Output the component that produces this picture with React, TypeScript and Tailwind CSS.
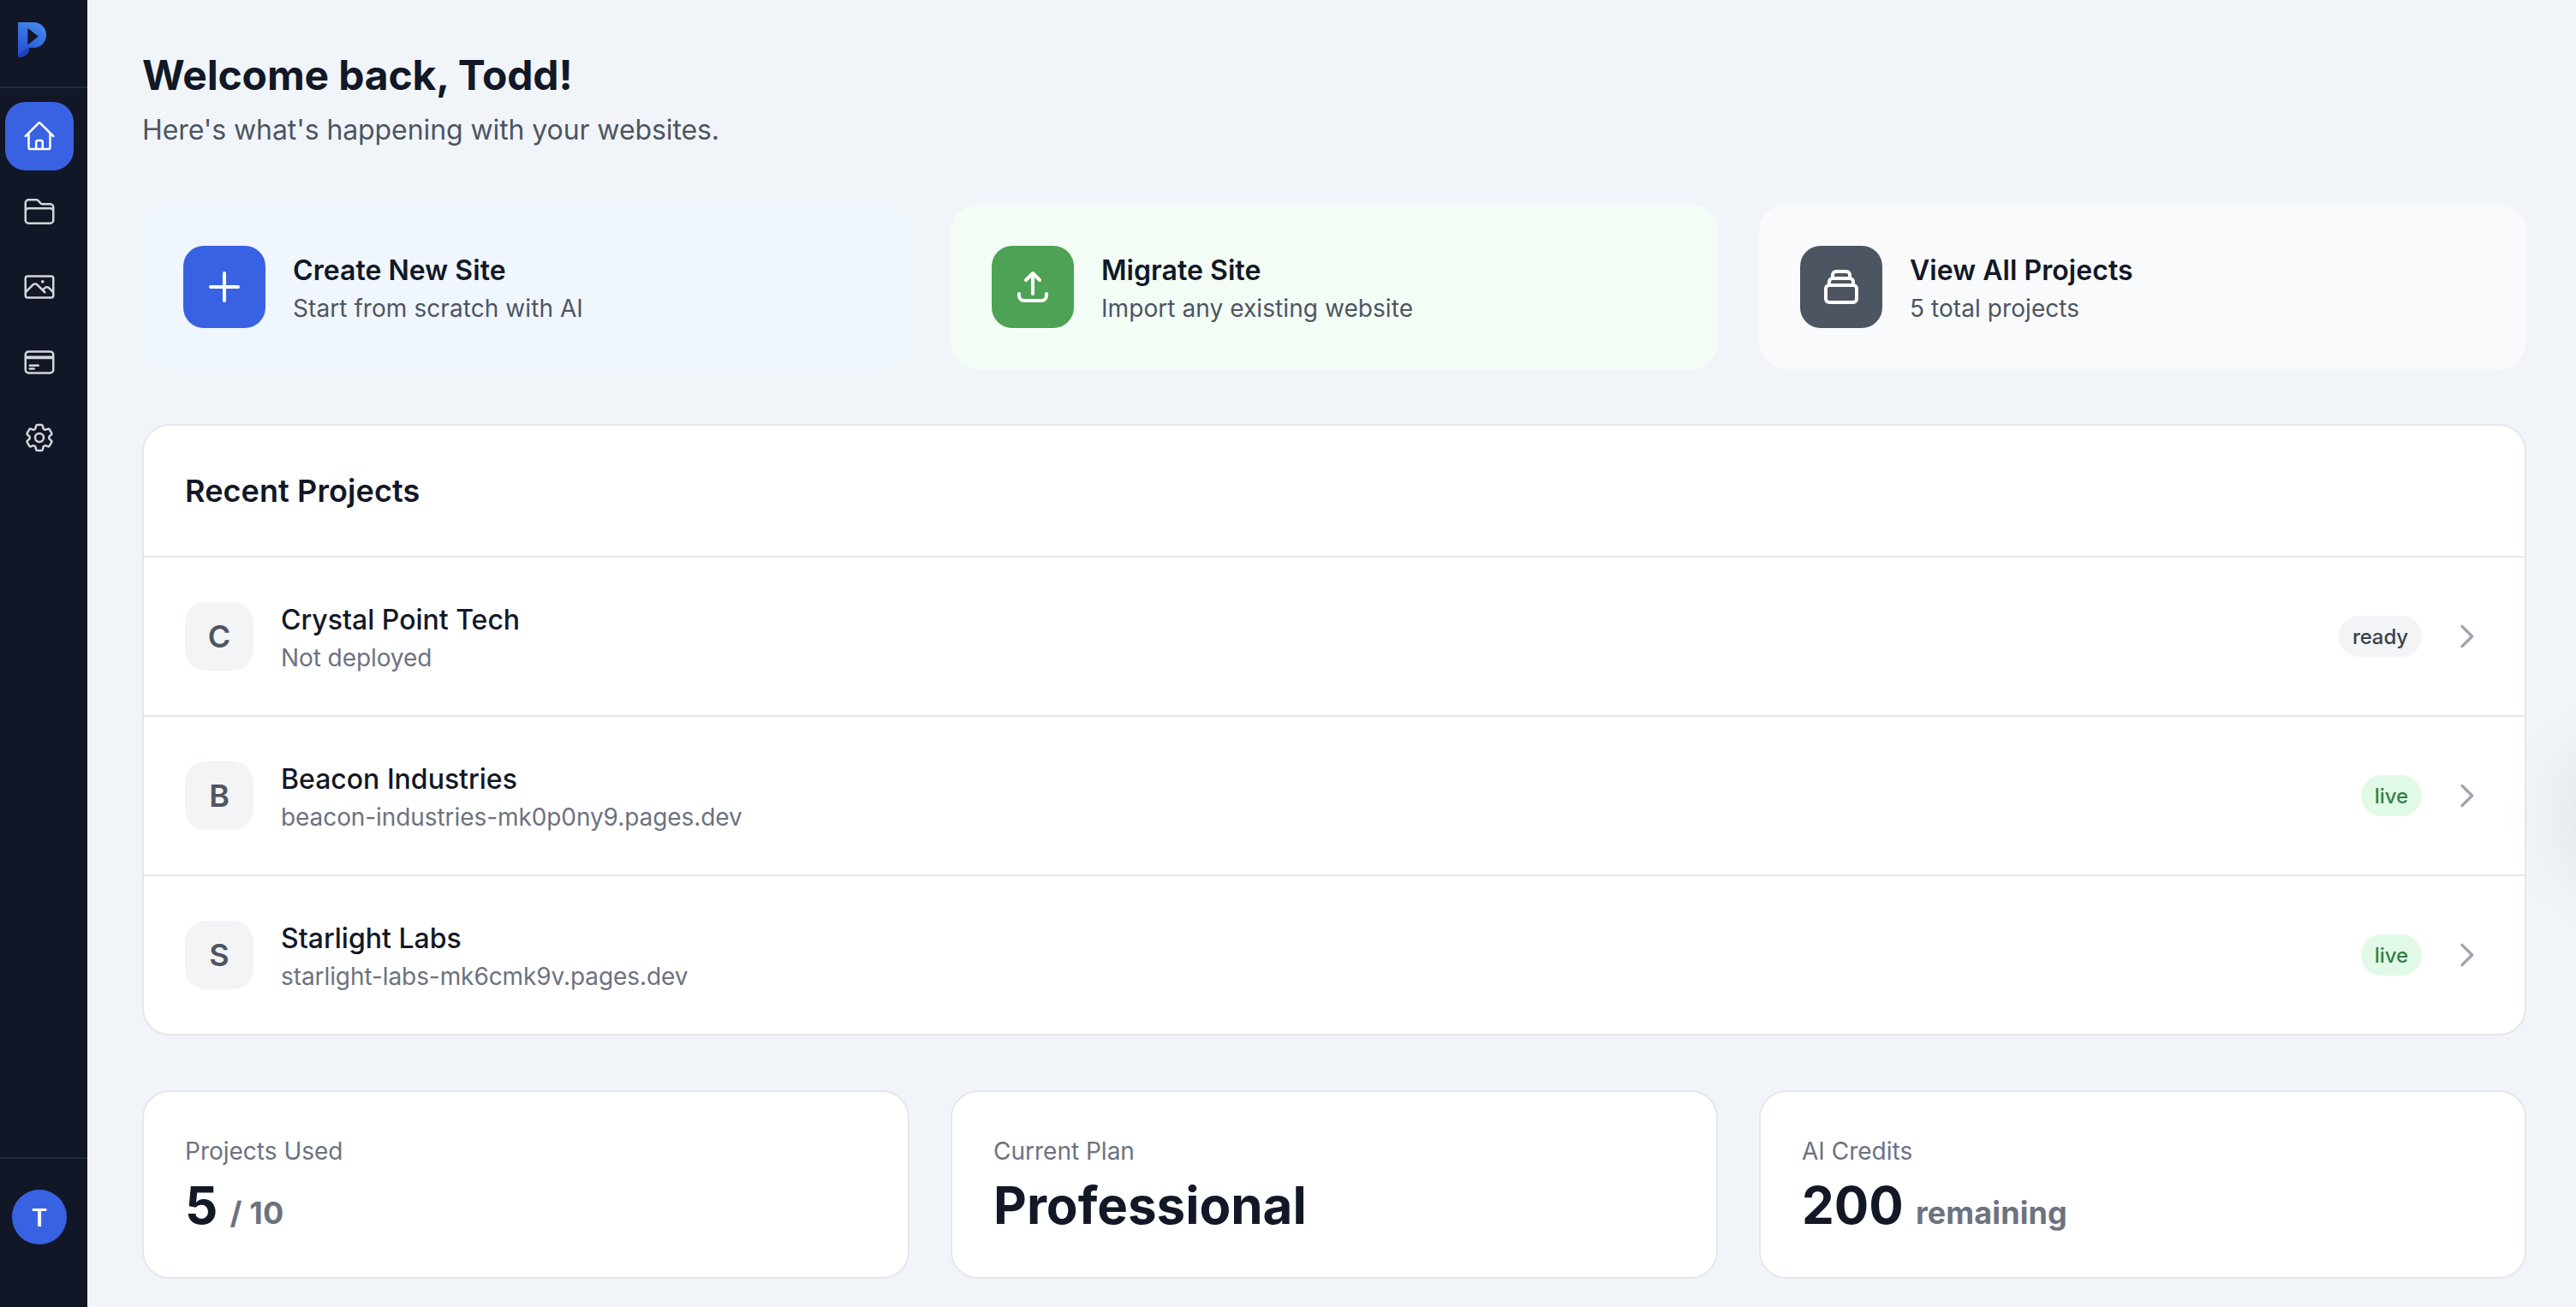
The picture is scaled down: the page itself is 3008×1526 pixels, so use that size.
import clsx from "clsx";
import type { IconType } from "react-icons";
import {
  HiOutlineChevronRight,
  HiOutlineCollection,
  HiOutlinePlus,
  HiOutlineUpload,
} from "react-icons/hi";
import {
  HiOutlineCog6Tooth,
  HiOutlineCreditCard,
  HiOutlineFolder,
  HiOutlineHome,
  HiOutlinePhoto,
} from "react-icons/hi2";

interface NavItem {
  label: string;
  icon: IconType;
  active?: boolean;
}

const NAV: NavItem[] = [
  { label: "Dashboard", icon: HiOutlineHome, active: true },
  { label: "Projects", icon: HiOutlineFolder },
  { label: "Media", icon: HiOutlinePhoto },
  { label: "Billing", icon: HiOutlineCreditCard },
  { label: "Settings", icon: HiOutlineCog6Tooth },
];

const ACTIONS = [
  {
    title: "Create New Site",
    hint: "Start from scratch with AI",
    icon: HiOutlinePlus,
    card: "bg-[#f0f6fe]",
    tile: "bg-[#3962e3]",
  },
  {
    title: "Migrate Site",
    hint: "Import any existing website",
    icon: HiOutlineUpload,
    card: "bg-[#f3fdf5]",
    tile: "bg-[#4ea255]",
  },
  {
    title: "View All Projects",
    hint: "5 total projects",
    icon: HiOutlineCollection,
    card: "bg-[#f9fafc]",
    tile: "bg-[#4d5562]",
  },
];

const PROJECTS = [
  { name: "Crystal Point Tech", url: "Not deployed", status: "ready" },
  {
    name: "Beacon Industries",
    url: "beacon-industries-mk0p0ny9.pages.dev",
    status: "live",
  },
  {
    name: "Starlight Labs",
    url: "starlight-labs-mk6cmk9v.pages.dev",
    status: "live",
  },
];

const STATS = [
  { label: "Projects Used", value: "5", suffix: "/ 10" },
  { label: "Current Plan", value: "Professional" },
  { label: "AI Credits", value: "200", suffix: "remaining" },
];

export default function App() {
  return (
    <div className="relative flex h-[1526px] w-[3008px] overflow-hidden bg-[#f1f5fa] font-['Inter',sans-serif] text-[#121826]">
      <Sidebar />

      <main className="flex-1 pt-14 pr-[58px] pl-16">
        <h1 className="text-[48px] leading-[64px] font-bold tracking-[-0.16px]">
          Welcome back, Todd!
        </h1>
        <p className="mt-2 text-[32px] leading-[48px] tracking-[-0.09px] text-[#4d5562]">
          Here's what's happening with your websites.
        </p>

        <div className="mt-[63px] grid grid-cols-3 gap-12">
          {ACTIONS.map(({ title, hint, icon: Icon, card, tile }) => (
            <a
              key={title}
              className={clsx("flex items-center gap-8 rounded-[32px] p-12", card)}
            >
              <div
                className={clsx(
                  "flex size-24 shrink-0 items-center justify-center rounded-3xl text-white",
                  tile,
                )}
              >
                <Icon className="size-12" />
              </div>
              <div className="mt-px -mb-px">
                <h3 className="text-[32px] leading-[48px] font-semibold tracking-[0.05px]">
                  {title}
                </h3>
                <p className="text-[28px] leading-10 tracking-[0.07px] text-[#4d5562]">{hint}</p>
              </div>
            </a>
          ))}
        </div>

        <section className="mt-16 rounded-[32px] border-2 border-[#e5e7eb] bg-white">
          <h2 className="p-12 text-[36px] leading-[56px] font-semibold tracking-[0.1px]">
            Recent Projects
          </h2>
          {PROJECTS.map((project) => (
            <ProjectRow key={project.name} {...project} />
          ))}
        </section>

        <div className="mt-16 grid grid-cols-3 gap-12">
          {STATS.map(({ label, value, suffix }) => (
            <div
              key={label}
              className="rounded-[32px] border-2 border-[#e5e7eb] bg-white p-12"
            >
              <p className="mt-px -mb-px text-[28px] leading-10 text-[#6c727f]">{label}</p>
              <p className="mt-2 text-[60px] leading-[72px] font-bold">
                {value}
                {suffix && (
                  <>
                    {" "}
                    <span className="text-[36px] leading-none tracking-[0.1px] text-[#6c727f]">
                      {suffix}
                    </span>
                  </>
                )}
              </p>
            </div>
          ))}
        </div>
      </main>

      {/* help widget parked past the right edge, only its shadow shows */}
      <div className="absolute top-[882px] left-[3008px] size-[140px] rounded-full shadow-[0_0_96px_0_rgba(30,20,0,0.13)]" />
    </div>
  );
}

/* ===== */

function Sidebar() {
  return (
    <aside className="flex w-[102px] shrink-0 flex-col bg-[#121727]">
      <div className="h-[103px] border-b-2 border-[#212a38] pt-[26px] pl-[21px]">
        <Logo />
      </div>
      <nav className="flex flex-1 flex-col gap-2 pt-4 pl-1.5">
        {NAV.map(({ label, icon: Icon, active }) => (
          <a
            key={label}
            aria-label={label}
            className={clsx(
              "flex size-20 items-center justify-center rounded-3xl",
              active ? "bg-[#3962e3] text-white" : "text-[#d2d5db]",
            )}
          >
            <Icon className="size-10" />
          </a>
        ))}
      </nav>
      <div className="h-[175px] border-t-2 border-[#212a38] pt-9 pl-3.5">
        <div className="flex size-16 items-center justify-center rounded-full bg-[#3962e3] pt-0.5 text-[28px] font-semibold text-white">
          T
        </div>
      </div>
    </aside>
  );
}

function Logo() {
  return (
    <svg viewBox="0 0 33 41" className="h-[41px] w-[33px]">
      <defs>
        <linearGradient id="logo-body" x1="0.7" y1="0" x2="0.3" y2="1">
          <stop offset="0" stopColor="#4689ea" />
          <stop offset="1" stopColor="#234fd6" />
        </linearGradient>
      </defs>
      <path
        d="M0 0H18C27 0 33 6.500 33 14.800S27 29.800 18.500 29.800H13V34C10.500 37.500 6.500 40.500 3 41C1 41 0 39.500 0 38Z M11.300 6.800V26.500L23.800 16.500Z"
        fill="url(#logo-body)"
        fillRule="evenodd"
      />
      <path
        d="M13 28V34C10.500 37.500 6.500 40.500 3 41C1.500 41 0.500 40 0.500 38.500Z"
        fill="#1f43bd"
      />
    </svg>
  );
}

function ProjectRow({ name, url, status }: { name: string; url: string; status: string }) {
  return (
    <a className="flex items-center gap-8 border-t-2 border-[#e5e7eb] p-12">
      <div className="flex size-20 shrink-0 items-center justify-center rounded-3xl bg-[#f3f4f6] text-[36px] font-semibold text-[#4d5562]">
        {name[0]}
      </div>
      <div className="mt-px -mb-px flex-1">
        <h3 className="text-[32px] leading-[48px] font-medium">{name}</h3>
        <p className="text-[28px] leading-10 tracking-[-0.08px] text-[#6c727f]">{url}</p>
      </div>
      <span
        className={clsx(
          "rounded-full px-4 pt-[9px] pb-[7px] text-[24px] leading-8 font-medium tracking-[-0.1px]",
          status === "live" ? "bg-[#e1fae8] text-[#377e44]" : "bg-[#f3f4f6] text-[#394150]",
        )}
      >
        {status}
      </span>
      <HiOutlineChevronRight className="size-10 text-[#9ea3ae]" />
    </a>
  );
}
